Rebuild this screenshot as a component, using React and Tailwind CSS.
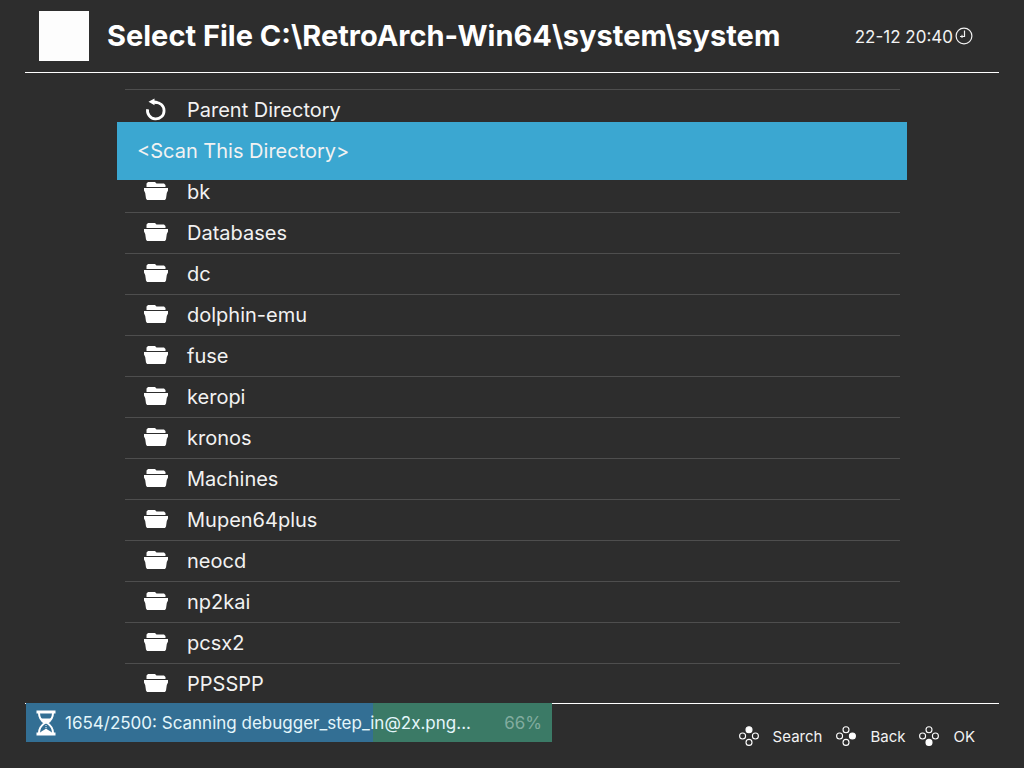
import React, { useState } from 'react';

const folders = [
    'bk',
    'Databases',
    'dc',
    'dolphin-emu',
    'fuse',
    'keropi',
    'kronos',
    'Machines',
    'Mupen64plus',
    'neocd',
    'np2kai',
    'pcsx2',
    'PPSSPP'
];

const entries = [
    { label: 'Parent Directory', type: 'parent' },
    { label: '<Scan This Directory>', type: 'action' },
    ...folders.map(name => ({ label: name, type: 'folder' }))
];

const FolderIcon = () => (
    <svg viewBox="0 0 24 24" className="w-6 h-6" fill="currentColor" aria-hidden="true">
        <path d="M2.5 7V3.5L4 2H11L12.5 3.5H20L21.5 5V7Z" />
        <path d="M0 8H24V10.5L22.8 13L22 18.5L21 20H3L2 18.5L1.2 13L0 10.5Z" />
    </svg>
);

const ParentIcon = () => (
    <svg viewBox="0 0 24 24" className="w-6 h-6" aria-hidden="true">
        <path d="M3.6 11.2A8.3 8.3 0 1 0 11 4.4" fill="none" stroke="currentColor" strokeWidth="2.8" />
        <path d="M4.5 3.8L10.5 0.4V2.6L13.5 3V5.8L10.5 5.8V7.2Z" fill="currentColor" />
    </svg>
);

const ClockIcon = () => (
    <svg viewBox="0 0 18 18" className="w-[18px] h-[18px]" fill="none" stroke="currentColor" aria-hidden="true">
        <circle cx="9" cy="9" r="7.9" strokeWidth="1.2" />
        <path d="M9.5 3.5V9.5H5" strokeWidth="1.2" />
        <path d="M7 7.8V11" strokeWidth="1" />
    </svg>
);

const HourglassIcon = () => (
    <svg viewBox="0 0 20 26" className="w-5 h-[26px]" aria-hidden="true">
        <path d="M0.5 0.5H19.5V3.5H0.5ZM0.5 22.5H19.5V25.5H0.5Z" fill="currentColor" />
        <path d="M3 3C3 8 5 10.5 8.7 13C5 15.5 3 18 3 23M17 3C17 8 15 10.5 11.3 13C15 15.5 17 18 17 23" fill="none" stroke="currentColor" strokeWidth="2" />
        <path d="M4.5 8.5H15.5C14.5 10.5 12 12 10 13.5C8 12 5.5 10.5 4.5 8.5Z" fill="currentColor" />
        <path d="M4 23C5 21 8 20.5 10 18.5C12 20.5 15 21 16 23Z" fill="currentColor" />
        <path d="M10 13V19" stroke="currentColor" strokeWidth="1" strokeDasharray="1 1" />
    </svg>
);

const padButtons = [
    { id: 'up', cx: 10, cy: 3.8 },
    { id: 'left', cx: 3.6, cy: 10 },
    { id: 'right', cx: 16.4, cy: 10 },
    { id: 'down', cx: 10, cy: 16.4 }
];

const PadIcon = ({ active }) => (
    <svg viewBox="0 0 20 20" className="w-5 h-5 text-white" aria-hidden="true">
        {padButtons.map(({ id, cx, cy }) => (
            <circle
                key={id}
                cx={cx}
                cy={cy}
                r="3"
                fill={id === active ? 'currentColor' : 'none'}
                stroke="currentColor"
                strokeWidth="1.1"
            />
        ))}
    </svg>
);

const Entry = ({ entry, selected, onSelect }) => (
    <li className={selected ? 'relative z-10 -ml-2 -mr-[7px] -mt-2 -mb-[9px]' : 'border-t border-[#4e4e4e]'}>
        <button
            type="button"
            onClick={onSelect}
            className={
                selected
                    ? 'flex items-center w-full h-[58px] px-5 bg-[#3ba7d1] text-left'
                    : 'flex items-center w-full h-10 px-[19px] text-left'
            }
        >
            {entry.type !== 'action' && (
                <span className="w-6 mr-[19px] shrink-0 text-white">
                    {entry.type === 'parent' ? <ParentIcon /> : <FolderIcon />}
                </span>
            )}
            {entry.label}
        </button>
    </li>
);

const Notification = ({ message, percent }) => (
    <div className="relative z-10 flex items-center w-[526px] h-[39px] -mt-px ml-px px-[10px] bg-[#3b7a66] text-[#e4f6fb]">
        <div className="absolute inset-y-0 left-0 bg-[#336f94]" style={{ width: `${percent}%` }} />
        <span className="relative text-white"><HourglassIcon /></span>
        <span className="relative ml-[9px] pt-[3px] text-[17px]">{message}</span>
        <span className="relative ml-auto pt-[3px] text-[17px] text-[#82ac9f]">{percent}%</span>
    </div>
);

const PadButton = ({ active, label }) => (
    <button type="button" className="flex items-center gap-[14px]">
        <PadIcon active={active} />
        <span className="pt-[3px]">{label}</span>
    </button>
);

const App = () => {
    const [selected, setSelected] = useState(1);

    return (
        <div className="flex flex-col h-screen overflow-hidden bg-[#2d2d2d] text-[#f2f2f2] font-['Inter',sans-serif]">
            <header className="flex items-center h-[73px] shrink-0 mx-[25px] pl-[14px] pr-[26px] border-b border-white">
                <div className="w-[50px] h-[50px] shrink-0 bg-[#fdfdfd]" />
                <h1 className="ml-[18px] text-[29px] font-bold text-white whitespace-nowrap">
                    Select File C:\RetroArch-Win64\system\system
                </h1>
                <div className="flex items-center gap-[2px] ml-auto text-[17px] whitespace-nowrap">
                    <time className="pt-[3px]">22-12 20:40</time>
                    <ClockIcon />
                </div>
            </header>

            <main className="flex-1 min-h-0 overflow-hidden pt-4 pl-[125px] pr-[124px]">
                <ul className="text-xl">
                    {entries.map((entry, index) => (
                        <Entry
                            key={entry.label}
                            entry={entry}
                            selected={index === selected}
                            onSelect={() => setSelected(index)}
                        />
                    ))}
                </ul>
            </main>

            <footer className="flex items-start justify-between h-[65px] shrink-0 mx-[25px] border-t border-white">
                <Notification message="1654/2500: Scanning debugger_step_in@2x.png..." percent={66} />
                <div className="flex gap-[14px] pt-[19px] pr-6 text-[15px]">
                    <PadButton active="up" label="Search" />
                    <PadButton active="right" label="Back" />
                    <PadButton active="down" label="OK" />
                </div>
            </footer>
        </div>
    );
};

export default App;
